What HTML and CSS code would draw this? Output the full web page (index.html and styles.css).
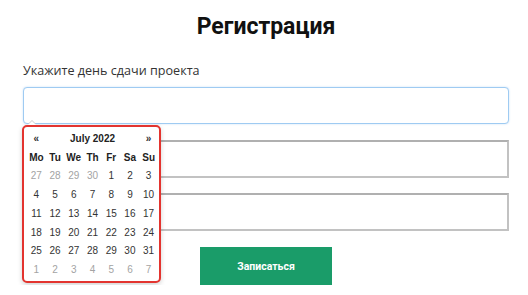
FILE: index.html
```html
<!DOCTYPE html>
<html lang="ru">
<head>
<meta charset="utf-8">
<title>Регистрация</title>
<link rel="stylesheet" href="styles.css">
</head>
<body>
<div class="page">
  <h1 class="title">Регистрация</h1>
  <label class="label">Укажите день сдачи проекта</label>
  <div class="field">
    <div class="input input-focus"></div>
    <div class="picker">
      <span class="caret"></span>
      <div class="cal">
        <div class="nav">«</div>
        <div class="month">July 2022</div>
        <div class="nav">»</div>
        <div class="dow">Mo</div><div class="dow">Tu</div><div class="dow">We</div><div class="dow">Th</div><div class="dow">Fr</div><div class="dow">Sa</div><div class="dow">Su</div>
        <div class="d old">27</div><div class="d old">28</div><div class="d old">29</div><div class="d old">30</div><div class="d">1</div><div class="d">2</div><div class="d">3</div>
        <div class="d">4</div><div class="d">5</div><div class="d">6</div><div class="d">7</div><div class="d">8</div><div class="d">9</div><div class="d">10</div>
        <div class="d">11</div><div class="d">12</div><div class="d">13</div><div class="d">14</div><div class="d">15</div><div class="d">16</div><div class="d">17</div>
        <div class="d">18</div><div class="d">19</div><div class="d">20</div><div class="d">21</div><div class="d">22</div><div class="d">23</div><div class="d">24</div>
        <div class="d">25</div><div class="d">26</div><div class="d">27</div><div class="d">28</div><div class="d">29</div><div class="d">30</div><div class="d">31</div>
        <div class="d old">1</div><div class="d old">2</div><div class="d old">3</div><div class="d old">4</div><div class="d old">5</div><div class="d old">6</div><div class="d old">7</div>
      </div>
    </div>
  </div>
  <div class="input input-plain gap2"></div>
  <div class="input input-plain gap3"></div>
  <div class="actions">
    <button class="btn">Записаться</button>
  </div>
</div>
</body>
</html>
```
FILE: styles.css
```css
* { box-sizing: border-box; }
html, body { margin: 0; padding: 0; background: #fff; }
.page {
  width: 528px;
  padding: 13px 19px 0 23px;
  display: flex;
  flex-direction: column;
}
.title {
  margin: 0;
  font-family: Roboto, "Liberation Sans", sans-serif;
  font-weight: 700;
  font-size: 23px;
  line-height: 28px;
  height: 28px;
  text-align: center;
  color: #111;
}
.label {
  margin-top: 20px;
  font-family: "Open Sans", "Noto Sans", sans-serif;
  font-size: 12.6px;
  line-height: 19px;
  color: #333;
}
.field {
  position: relative;
  margin-top: 7px;
}
.input {
  width: 486px;
  background: #fff;
}
.input-focus {
  height: 37px;
  border: 1px solid #9fcbf2;
  border-radius: 4px;
  box-shadow: 0 0 2px rgba(120, 180, 240, 0.45);
}
.input-plain {
  height: 38px;
  border: 2px solid #c2c2c2;
  border-top-color: #b0b0b0;
}
.gap2 { margin-top: 16px; }
.gap3 { margin-top: 15px; }
.actions {
  display: flex;
  justify-content: center;
  margin-top: 16px;
}
.btn {
  width: 132px;
  height: 38px;
  border: 0;
  background: #1a9c69;
  color: #fff;
  font-family: Roboto, "Liberation Sans", sans-serif;
  font-weight: 700;
  font-size: 10.5px;
  padding: 0;
}
.picker {
  position: absolute;
  left: -1px;
  top: calc(100% + 1px);
  z-index: 2;
}
.caret {
  position: absolute;
  left: 6px;
  top: -4px;
  width: 0;
  height: 0;
  border-left: 4px solid transparent;
  border-right: 4px solid transparent;
  border-bottom: 4px solid #fff;
  filter: drop-shadow(0 -1px 0 #ccc);
}
.cal {
  width: 139px;
  border: 2px solid #e3342f;
  border-radius: 5px;
  background: #fff;
  padding: 2px 1px 2px 3px;
  box-shadow: 0 2px 5px rgba(0, 0, 0, 0.18);
  display: grid;
  grid-template-columns: repeat(7, 1fr);
  grid-auto-rows: 18.75px;
  font-family: "Liberation Sans", Arial, sans-serif;
  font-size: 10px;
  align-items: center;
  text-align: center;
}
.nav {
  font-weight: 700;
  color: #333;
  font-size: 10px;
}
.month {
  grid-column: span 5;
  font-weight: 700;
  font-size: 10px;
  color: #222;
}
.dow {
  font-weight: 700;
  font-size: 10px;
  color: #222;
}
.d { color: #333; }
.d.old { color: #a3a3a3; }
```
